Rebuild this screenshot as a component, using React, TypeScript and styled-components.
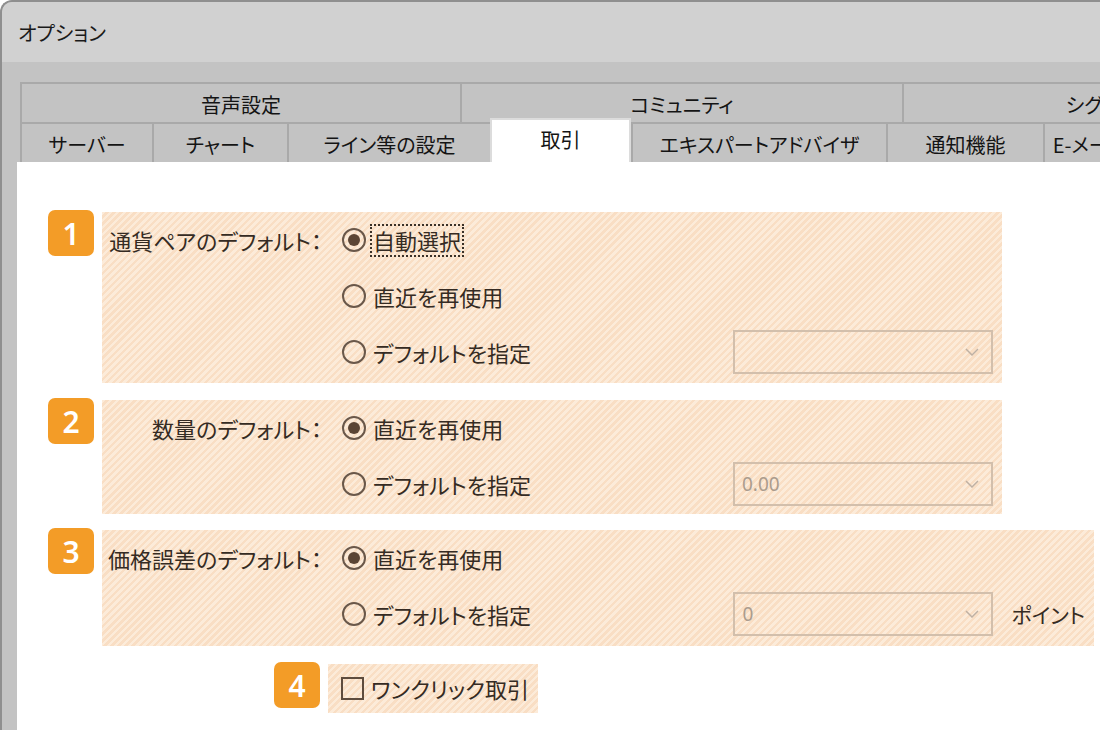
import styled, { createGlobalStyle } from "styled-components";

const Global = createGlobalStyle`
    html, body {
        margin: 0;
        padding: 0;
        overflow: hidden;
        background: #ffffff;
    }
    body {
        font-family: "Noto Sans CJK JP", "Noto Sans", sans-serif;
        font-feature-settings: "palt";
    }
`;

const Window = styled.div`
    width: 1100px;
    height: 730px;
    box-sizing: border-box;
    border-top: 2px solid #8f8f8f;
    border-left: 2px solid #8f8f8f;
    border-top-left-radius: 12px;
    background: #c3c3c3;
    overflow: hidden;
    display: flex;
    flex-direction: column;
`;

const TitleBar = styled.div`
    height: 60px;
    flex: none;
    display: flex;
    align-items: center;
    padding-left: 16px;
    background: #d1d1d1;
    color: #1a1a1a;
    font-size: 20px;
`;

const Body = styled.div`
    flex: 1;
    display: flex;
    flex-direction: column;
    padding: 20px 0 0 15px;
    min-width: 0;
`;

const TabStrip = styled.div`
    margin-left: 3px;
    display: flex;
    flex-direction: column;
`;

const TabRow = styled.div<{ $h: number }>`
    display: flex;
    align-items: flex-end;
    height: ${(p) => p.$h}px;
`;

const Tab = styled.div<{ $w: number; $top?: boolean }>`
    width: ${(p) => p.$w}px;
    height: 100%;
    flex: none;
    box-sizing: border-box;
    display: flex;
    align-items: center;
    justify-content: center;
    border-left: 2px solid #a9a9a9;
    ${(p) => (p.$top ? "border-top: 2px solid #a9a9a9; border-bottom: 2px solid #a9a9a9;" : "")}
    padding-top: 2px;
    color: #141414;
    font-size: 20px;
    white-space: nowrap;
`;

const ActiveTab = styled.div<{ $w: number }>`
    width: ${(p) => p.$w}px;
    height: 44px;
    flex: none;
    align-self: flex-end;
    box-sizing: border-box;
    display: flex;
    align-items: center;
    justify-content: center;
    padding-bottom: 4px;
    background: #ffffff;
    border: 2px solid #dcdcdc;
    border-bottom: 0;
    color: #141414;
    font-size: 20px;
`;

const Panel = styled.div`
    flex: 1;
    background: #ffffff;
    padding: 50px 0 0 31px;
    display: flex;
    flex-direction: column;
`;

const Section = styled.div<{ $gap: number; $indent?: number }>`
    display: flex;
    align-items: flex-start;
    gap: 8px;
    margin-bottom: ${(p) => p.$gap}px;
    margin-left: ${(p) => p.$indent ?? 0}px;
`;

const Badge = styled.div`
    width: 46px;
    height: 46px;
    flex: none;
    margin-top: -2px;
    border-radius: 7px;
    background: #f39c27;
    color: #ffffff;
    font-family: "Noto Sans", sans-serif;
    font-weight: 600;
    font-size: 30px;
    display: flex;
    align-items: center;
    justify-content: center;
`;

const stripes = `repeating-linear-gradient(135deg, #fcebd9 0 2.5px, #f9dec4 2.5px 5px)`;

const Striped = styled.div<{ $w: number; $pb?: number }>`
    width: ${(p) => p.$w}px;
    flex: none;
    box-sizing: border-box;
    padding: 0 9px ${(p) => p.$pb ?? 0}px 0;
    background: ${stripes};
    display: flex;
    flex-direction: column;
`;

const Row = styled.div`
    height: 56px;
    display: flex;
    align-items: center;
`;

const Label = styled.div`
    width: 220px;
    flex: none;
    margin-right: 20px;
    text-align: right;
    font-size: 22px;
    color: #352b23;
    white-space: nowrap;
`;

const Option = styled.div`
    flex: 1;
    display: flex;
    align-items: center;
`;

const Radio = styled.span<{ $on?: boolean }>`
    width: 24px;
    height: 24px;
    flex: none;
    box-sizing: border-box;
    border-radius: 50%;
    border: 2px solid #6a584a;
    display: flex;
    align-items: center;
    justify-content: center;
    &::after {
        content: "";
        width: 12px;
        height: 12px;
        border-radius: 50%;
        background: #5b4535;
        display: ${(p) => (p.$on ? "block" : "none")};
    }
`;

const Check = styled.span`
    width: 23px;
    height: 23px;
    flex: none;
    box-sizing: border-box;
    border: 2px solid #5e4c3e;
`;

const OptText = styled.span<{ $focus?: boolean }>`
    margin-left: 4px;
    padding: 1px 1px 2px;
    border: 2px ${(p) => (p.$focus ? "dotted #3a3128" : "solid transparent")};
    font-size: 22px;
    line-height: 26px;
    color: #352b23;
    white-space: nowrap;
`;

const Select = styled.div`
    width: 260px;
    height: 44px;
    flex: none;
    box-sizing: border-box;
    border: 2px solid #d2bfac;
    display: flex;
    align-items: center;
    justify-content: space-between;
    padding: 0 12px 0 7px;
    color: #ab9c8d;
    font-family: "Noto Sans", sans-serif;
    font-size: 19px;
`;

const Unit = styled.span`
    margin-left: 18px;
    font-size: 21px;
    color: #352b23;
    white-space: nowrap;
`;

const CheckBox = styled.div`
    height: 49px;
    padding: 0 6px 0 13px;
    display: flex;
    align-items: center;
    background: ${stripes};
`;

function Chevron() {
    return (
        <svg width="14" height="8" viewBox="0 0 14 8">
            <polyline points="1,1 7,7 13,1" fill="none" stroke="#bfb0a2" strokeWidth="1.5" />
        </svg>
    );
}

function Choice({ on, focus, text }: { on?: boolean; focus?: boolean; text: string }) {
    return (
        <Option>
            <Radio $on={on} />
            <OptText $focus={focus}>{text}</OptText>
        </Option>
    );
}

const topTabs = [
    { name: "音声設定", w: 440 },
    { name: "コミュニティ", w: 442 },
    { name: "シグナル", w: 400 },
];

export default function App() {
    return (
        <>
            <Global />
            <Window>
                <TitleBar>オプション</TitleBar>
                <Body>
                    <TabStrip>
                        <TabRow $h={42}>
                            {topTabs.map((t) => (
                                <Tab key={t.name} $w={t.w} $top>
                                    {t.name}
                                </Tab>
                            ))}
                        </TabRow>
                        <TabRow $h={38}>
                            <Tab $w={132}>サーバー</Tab>
                            <Tab $w={135}>チャート</Tab>
                            <Tab $w={203}>ライン等の設定</Tab>
                            <ActiveTab $w={141}>取引</ActiveTab>
                            <Tab $w={255}>エキスパートアドバイザ</Tab>
                            <Tab $w={157}>通知機能</Tab>
                            <Tab $w={92}>E-メール</Tab>
                        </TabRow>
                    </TabStrip>
                    <Panel>
                        <Section $gap={17}>
                            <Badge>1</Badge>
                            <Striped $w={900} $pb={3}>
                                <Row>
                                    <Label>通貨ペアのデフォルト：</Label>
                                    <Choice on focus text="自動選択" />
                                </Row>
                                <Row>
                                    <Label />
                                    <Choice text="直近を再使用" />
                                </Row>
                                <Row>
                                    <Label />
                                    <Choice text="デフォルトを指定" />
                                    <Select>
                                        <span />
                                        <Chevron />
                                    </Select>
                                </Row>
                            </Striped>
                        </Section>
                        <Section $gap={16}>
                            <Badge>2</Badge>
                            <Striped $w={900} $pb={2}>
                                <Row>
                                    <Label>数量のデフォルト：</Label>
                                    <Choice on text="直近を再使用" />
                                </Row>
                                <Row>
                                    <Label />
                                    <Choice text="デフォルトを指定" />
                                    <Select>
                                        <span>0.00</span>
                                        <Chevron />
                                    </Select>
                                </Row>
                            </Striped>
                        </Section>
                        <Section $gap={18}>
                            <Badge>3</Badge>
                            <Striped $w={992} $pb={4}>
                                <Row>
                                    <Label>価格誤差のデフォルト：</Label>
                                    <Choice on text="直近を再使用" />
                                </Row>
                                <Row>
                                    <Label />
                                    <Choice text="デフォルトを指定" />
                                    <Select>
                                        <span>0</span>
                                        <Chevron />
                                    </Select>
                                    <Unit>ポイント</Unit>
                                </Row>
                            </Striped>
                        </Section>
                        <Section $gap={0} $indent={226}>
                            <Badge>4</Badge>
                            <CheckBox>
                                <Check />
                                <OptText>ワンクリック取引</OptText>
                            </CheckBox>
                        </Section>
                    </Panel>
                </Body>
            </Window>
        </>
    );
}
